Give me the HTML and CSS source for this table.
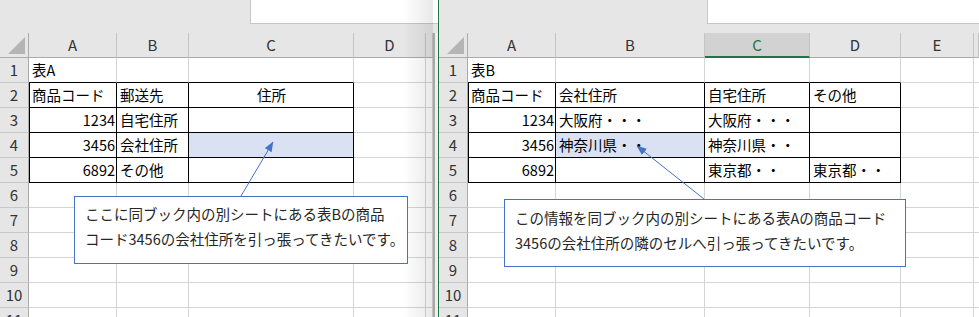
FILE: index.html
```html
<!DOCTYPE html>
<html lang="ja">
<head>
<meta charset="utf-8">
<title>Excel 表A / 表B</title>
<link rel="stylesheet" href="styles.css">
</head>
<body>
<div class="page">
  <div class="win win-left">
    <div class="topbar"><div class="fbox fbox-left"></div></div>
    <div class="body">
      <div class="sheet sheet-left">
        <div class="corner"></div><div class="ch">A</div><div class="ch">B</div><div class="ch">C</div><div class="ch">D</div><div class="ch"></div>
        <div class="rh">1</div><div class="c tt">表A</div><div class="c tt"></div><div class="c tt"></div><div class="c"></div><div class="c"></div>
        <div class="rh">2</div><div class="c tb tl">商品コード</div><div class="c tb">郵送先</div><div class="c tb ctr">住所</div><div class="c"></div><div class="c"></div>
        <div class="rh">3</div><div class="c tb tl num">1234</div><div class="c tb">自宅住所</div><div class="c tb"></div><div class="c"></div><div class="c"></div>
        <div class="rh">4</div><div class="c tb tl num">3456</div><div class="c tb">会社住所</div><div class="c tb fill"></div><div class="c"></div><div class="c"></div>
        <div class="rh">5</div><div class="c tb tl num">6892</div><div class="c tb">その他</div><div class="c tb"></div><div class="c"></div><div class="c"></div>
        <div class="rh">6</div><div class="c"></div><div class="c"></div><div class="c"></div><div class="c"></div><div class="c"></div>
        <div class="rh">7</div><div class="c"></div><div class="c"></div><div class="c"></div><div class="c"></div><div class="c"></div>
        <div class="rh">8</div><div class="c"></div><div class="c"></div><div class="c"></div><div class="c"></div><div class="c"></div>
        <div class="rh">9</div><div class="c"></div><div class="c"></div><div class="c"></div><div class="c"></div><div class="c"></div>
        <div class="rh">10</div><div class="c"></div><div class="c"></div><div class="c"></div><div class="c"></div><div class="c"></div>
        <div class="rh">11</div><div class="c"></div><div class="c"></div><div class="c"></div><div class="c"></div><div class="c"></div>
      </div>
      <div class="edge"></div>
    </div>
    <div class="shade"></div>
  </div>
  <div class="divider"></div>
  <div class="win win-right">
    <div class="topbar"><div class="fbox fbox-right"></div></div>
    <div class="sheet sheet-right">
      <div class="corner"></div><div class="ch">A</div><div class="ch">B</div><div class="ch sel">C</div><div class="ch">D</div><div class="ch">E</div><div class="ch"></div>
      <div class="rh">1</div><div class="c tt">表B</div><div class="c tt"></div><div class="c tt"></div><div class="c tt"></div><div class="c"></div><div class="c"></div>
      <div class="rh">2</div><div class="c tb tl">商品コード</div><div class="c tb">会社住所</div><div class="c tb">自宅住所</div><div class="c tb">その他</div><div class="c"></div><div class="c"></div>
      <div class="rh">3</div><div class="c tb tl num">1234</div><div class="c tb">大阪府・・・</div><div class="c tb">大阪府・・・</div><div class="c tb"></div><div class="c"></div><div class="c"></div>
      <div class="rh">4</div><div class="c tb tl num">3456</div><div class="c tb fill">神奈川県・・</div><div class="c tb">神奈川県・・</div><div class="c tb"></div><div class="c"></div><div class="c"></div>
      <div class="rh">5</div><div class="c tb tl num">6892</div><div class="c tb"></div><div class="c tb">東京都・・</div><div class="c tb">東京都・・</div><div class="c"></div><div class="c"></div>
      <div class="rh">6</div><div class="c"></div><div class="c"></div><div class="c"></div><div class="c"></div><div class="c"></div><div class="c"></div>
      <div class="rh">7</div><div class="c"></div><div class="c"></div><div class="c"></div><div class="c"></div><div class="c"></div><div class="c"></div>
      <div class="rh">8</div><div class="c"></div><div class="c"></div><div class="c"></div><div class="c"></div><div class="c"></div><div class="c"></div>
      <div class="rh">9</div><div class="c"></div><div class="c"></div><div class="c"></div><div class="c"></div><div class="c"></div><div class="c"></div>
      <div class="rh">10</div><div class="c"></div><div class="c"></div><div class="c"></div><div class="c"></div><div class="c"></div><div class="c"></div>
      <div class="rh">11</div><div class="c"></div><div class="c"></div><div class="c"></div><div class="c"></div><div class="c"></div><div class="c"></div>
    </div>
  </div>

  <div class="callout callout-left">ここに同ブック内の別シートにある表Bの商品<br>コード3456の会社住所を引っ張ってきたいです。</div>
  <div class="callout callout-right">この情報を同ブック内の別シートにある表Aの商品コード<br>3456の会社住所の隣のセルへ引っ張ってきたいです。</div>

  <svg class="arrows" width="979" height="317" viewBox="0 0 979 317">
    <defs>
      <marker id="ah" viewBox="0 0 10 8" refX="9.5" refY="4" markerWidth="10" markerHeight="8" orient="auto" markerUnits="userSpaceOnUse">
        <path d="M0,0 L10,4 L0,8 z" fill="#4472c4"/>
      </marker>
    </defs>
    <line x1="241" y1="196" x2="273" y2="142" stroke="#4472c4" stroke-width="1" marker-end="url(#ah)"/>
    <line x1="704" y1="199" x2="637" y2="146" stroke="#4472c4" stroke-width="1" marker-end="url(#ah)"/>
  </svg>
</div>
</body>
</html>
```

FILE: styles.css
```css
html, body {
  margin: 0;
  padding: 0;
  background: #ffffff;
}

.page {
  position: relative;
  width: 979px;
  height: 317px;
  overflow: hidden;
  display: flex;
  font-family: "Noto Sans CJK JP", "Noto Sans", sans-serif;
}

.win {
  position: relative;
  display: flex;
  flex-direction: column;
  overflow: hidden;
  height: 317px;
}

.win-left {
  width: 438px;
  flex: none;
}

.win-right {
  width: 540px;
  flex: none;
}

.divider {
  width: 1px;
  flex: none;
  background: #217346;
}

.topbar {
  height: 33px;
  flex: none;
  background: #e6e6e6;
  display: flex;
  justify-content: flex-end;
  align-items: flex-start;
}

.fbox {
  height: 24px;
  box-sizing: border-box;
  background: #ffffff;
  border-left: 1px solid #c6c6c6;
  border-bottom: 1px solid #c6c6c6;
}

.fbox-left {
  width: 188px;
}

.fbox-right {
  width: 272px;
}

.body {
  display: flex;
  flex: 1;
}

.sheet {
  display: grid;
  grid-auto-rows: 25px;
  flex: none;
}

.sheet-left {
  width: 433px;
  grid-template-columns: 29px 88px 72px 165px 72px 7px;
}

.sheet-right {
  width: 540px;
  grid-template-columns: 29px 88px 149px 105px 91px 73px 5px;
}

.edge {
  flex: none;
  width: 5px;
  box-sizing: border-box;
  border-left: 2px solid #a8a8a8;
  background: #efefef;
}

.shade {
  position: absolute;
  top: 0;
  bottom: 0;
  right: 5px;
  width: 30px;
  background: linear-gradient(to right, rgba(0, 0, 0, 0), rgba(0, 0, 0, 0.09));
  pointer-events: none;
}

.corner {
  position: relative;
  background: #e6e6e6;
  border-right: 1px solid #ababab;
  border-bottom: 1px solid #ababab;
}

.corner::after {
  content: "";
  position: absolute;
  right: 3px;
  bottom: 3px;
  width: 17px;
  height: 17px;
  background: #b5b5b5;
  clip-path: polygon(100% 0, 100% 100%, 0 100%);
}

.ch {
  background: #e6e6e6;
  border-right: 1px solid #c4c4c4;
  border-bottom: 1px solid #ababab;
  box-sizing: border-box;
  text-align: center;
  font-size: 15px;
  line-height: 24px;
  color: #333333;
}

.ch.sel {
  background: #d2d2d2;
  border-bottom: 2px solid #217346;
  color: #217346;
}

.rh {
  background: #e6e6e6;
  border-right: 1px solid #ababab;
  border-bottom: 1px solid #c8c8c8;
  box-sizing: border-box;
  text-align: center;
  font-size: 15px;
  line-height: 24px;
  color: #333333;
}

.c {
  background: #ffffff;
  border-right: 1px solid #d4d4d4;
  border-bottom: 1px solid #d4d4d4;
  box-sizing: border-box;
  font-size: 14.5px;
  line-height: 24px;
  color: #000000;
  padding: 0 2px 0 3px;
  white-space: nowrap;
  overflow: hidden;
}

.c.tt {
  border-bottom-color: #000000;
}

.c.tb {
  border-right-color: #000000;
  border-bottom-color: #000000;
}

.c.tl {
  box-shadow: inset 1px 0 0 #000000;
}

.c.num {
  text-align: right;
  padding-right: 1px;
}

.c.ctr {
  text-align: center;
}

.c.fill {
  background: #d9e1f2;
}

.callout {
  position: absolute;
  box-sizing: border-box;
  background: #ffffff;
  border: 1px solid #4472c4;
  padding: 4px 10px 0 10px;
  font-size: 14.5px;
  line-height: 25px;
  color: #262626;
  white-space: nowrap;
}

.callout-left {
  left: 74px;
  top: 196px;
  width: 334px;
  height: 68px;
}

.callout-right {
  left: 504px;
  top: 199px;
  width: 402px;
  height: 68px;
  padding-top: 5px;
}

.arrows {
  position: absolute;
  left: 0;
  top: 0;
  pointer-events: none;
}
```
